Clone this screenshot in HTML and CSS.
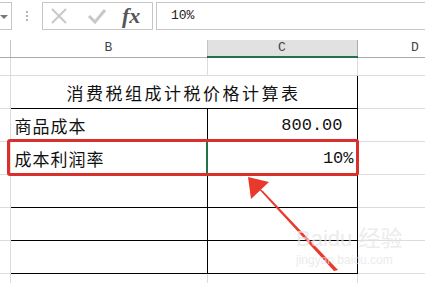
FILE: index.html
```html
<!DOCTYPE html>
<html lang="zh-CN">
<head>
  <meta charset="UTF-8">
  <title>消费税组成计税价格计算表</title>
  <link rel="stylesheet" href="styles.css">
</head>
<body>
<div class="window">
  <!-- 编辑栏 -->
  <div class="formula-bar">
    <div class="name-box"><span class="caret"></span></div>
    <div class="grip"><i></i><i></i><i></i></div>
    <div class="buttons">
      <svg class="btn-icon" width="20" height="18" viewBox="0 0 20 18">
        <path d="M3 2 L17 16 M17 2 L3 16" stroke="#c8c8c8" stroke-width="2" fill="none"/>
      </svg>
      <svg class="btn-icon" width="20" height="18" viewBox="0 0 20 18">
        <path d="M2 9 L8 15 L18 3" stroke="#c8c8c8" stroke-width="3" fill="none"/>
      </svg>
      <span class="fx">fx</span>
    </div>
    <div class="formula-input">10%</div>
  </div>

  <!-- 表格 -->
  <table class="sheet">
    <colgroup>
      <col class="col-head">
      <col class="col-b">
      <col class="col-c">
      <col class="col-d">
    </colgroup>
    <tr class="head-row">
      <td class="corner"></td>
      <td class="col-title">B</td>
      <td class="col-title active">C</td>
      <td class="col-title last">D</td>
    </tr>
    <tr class="row-short">
      <td class="rh"></td><td></td><td></td><td></td>
    </tr>
    <tr>
      <td class="rh"></td>
      <td class="cell caption" colspan="2">消费税组成计税价格计算表</td>
      <td></td>
    </tr>
    <tr>
      <td class="rh"></td>
      <td class="cell label">商品成本</td>
      <td class="cell num amount">800.00</td>
      <td></td>
    </tr>
    <tr>
      <td class="rh"></td>
      <td class="cell label">成本利润率</td>
      <td class="cell num selected">10%</td>
      <td></td>
    </tr>
    <tr>
      <td class="rh"></td><td class="cell"></td><td class="cell"></td><td></td>
    </tr>
    <tr>
      <td class="rh"></td><td class="cell"></td><td class="cell"></td><td></td>
    </tr>
    <tr>
      <td class="rh"></td><td class="cell"></td><td class="cell"></td><td></td>
    </tr>
    <tr class="row-short">
      <td class="rh"></td><td></td><td></td><td></td>
    </tr>
  </table>

  <!-- 标注 -->
  <div class="highlight"></div>
  <svg class="arrow" width="425" height="283" viewBox="0 0 425 283">
    <polygon points="248,177 251,199 269,182" fill="#e8392c"/>
    <polygon points="256,186 263,191 338,270 334,271" fill="#e8392c"/>
  </svg>
  <div class="watermark">
    <div class="wm-logo">Bai<span>du</span> 经验</div>
    <div class="wm-url">jingyan.baidu.com</div>
  </div>
</div>
</body>
</html>
```

FILE: styles.css
```css
body {
  margin: 0;
  padding: 0;
  background-color: #FFF;
}

.window {
  position: relative;
  width: 425px;
  height: 283px;
  overflow: hidden;
  font-family: "Noto Sans CJK SC", "Liberation Sans", sans-serif;
}

/* 编辑栏 */
.formula-bar {
  display: flex;
  align-items: stretch;
  height: 28px;
  margin-top: 2px;
  margin-bottom: 10px;
}

.name-box {
  width: 12px;
  box-sizing: border-box;
  border: 1px solid #c6c6c6;
  border-left: none;
  position: relative;
}

.caret {
  position: absolute;
  left: 0;
  top: 12px;
  border-left: 4px solid transparent;
  border-right: 4px solid transparent;
  border-top: 4px solid #777;
}

.grip {
  width: 30px;
  display: flex;
  flex-direction: column;
  align-items: center;
  justify-content: center;
  gap: 2px;
}

.grip i {
  width: 2px;
  height: 2px;
  background-color: #b5b5b5;
}

.buttons {
  width: 111px;
  box-sizing: border-box;
  border: 1px solid #c6c6c6;
  display: flex;
  align-items: center;
  padding-left: 6px;
}

.btn-icon {
  margin-right: 18px;
}

.fx {
  font-family: "Liberation Serif", serif;
  font-style: italic;
  font-weight: bold;
  font-size: 22px;
  color: #555;
  margin-left: -3px;
  line-height: 1;
}

.formula-input {
  flex: 1;
  margin-left: 3px;
  box-sizing: border-box;
  border: 1px solid #c6c6c6;
  border-right: none;
  padding-left: 14px;
  font-family: "Liberation Mono", monospace;
  font-size: 13px;
  line-height: 26px;
  color: #222;
}

/* 表格 */
.sheet {
  border-collapse: collapse;
  table-layout: fixed;
  width: 425px;
}

.col-head { width: 10px; }
.col-b { width: 197px; }
.col-c { width: 150px; }
.col-d { width: 68px; }

.sheet td {
  padding: 0;
  height: 32px;
  border-right: 1px solid #dcdcdc;
  border-bottom: 1px solid #dcdcdc;
}

.sheet .head-row td {
  height: 16px;
  border-bottom: 1px solid #ababab;
  border-right: 1px solid #c6c6c6;
  font-family: "Liberation Mono", monospace;
  font-size: 13px;
  color: #444;
  text-align: center;
  line-height: 16px;
}

.sheet .head-row td.active {
  background-color: #e1e1e1;
  border-bottom: 2px solid #217346;
  border-right-color: #ababab;
}

.sheet .head-row td.last {
  padding-left: 48px;
}

.sheet .row-short td {
  height: 17px;
}

.sheet td.cell {
  border: 1px solid #000;
  font-size: 17px;
  color: #111;
  letter-spacing: 1px;
}

.caption {
  text-align: center;
  letter-spacing: 2.5px !important;
}

.label {
  padding-left: 4px !important;
}

.num {
  text-align: right;
  font-family: "Liberation Mono", monospace;
  letter-spacing: 0 !important;
}

.amount {
  padding-right: 14px !important;
}

.selected {
  padding-right: 3px !important;
  border-left: 2px solid #217346 !important;
}

/* 标注 */
.highlight {
  position: absolute;
  left: 7px;
  top: 139px;
  width: 346px;
  height: 31px;
  border: 3px solid #d9302b;
  border-radius: 3px;
}

.arrow {
  position: absolute;
  left: 0;
  top: 0;
}

.watermark {
  position: absolute;
  left: 296px;
  top: 226px;
  color: #e4e4e4;
  opacity: 0.7;
}

.wm-logo {
  font-family: "Liberation Sans", "Noto Sans CJK SC", sans-serif;
  font-size: 22px;
  line-height: 26px;
}

.wm-url {
  font-family: "Liberation Sans", sans-serif;
  font-size: 12px;
  line-height: 16px;
}
```
